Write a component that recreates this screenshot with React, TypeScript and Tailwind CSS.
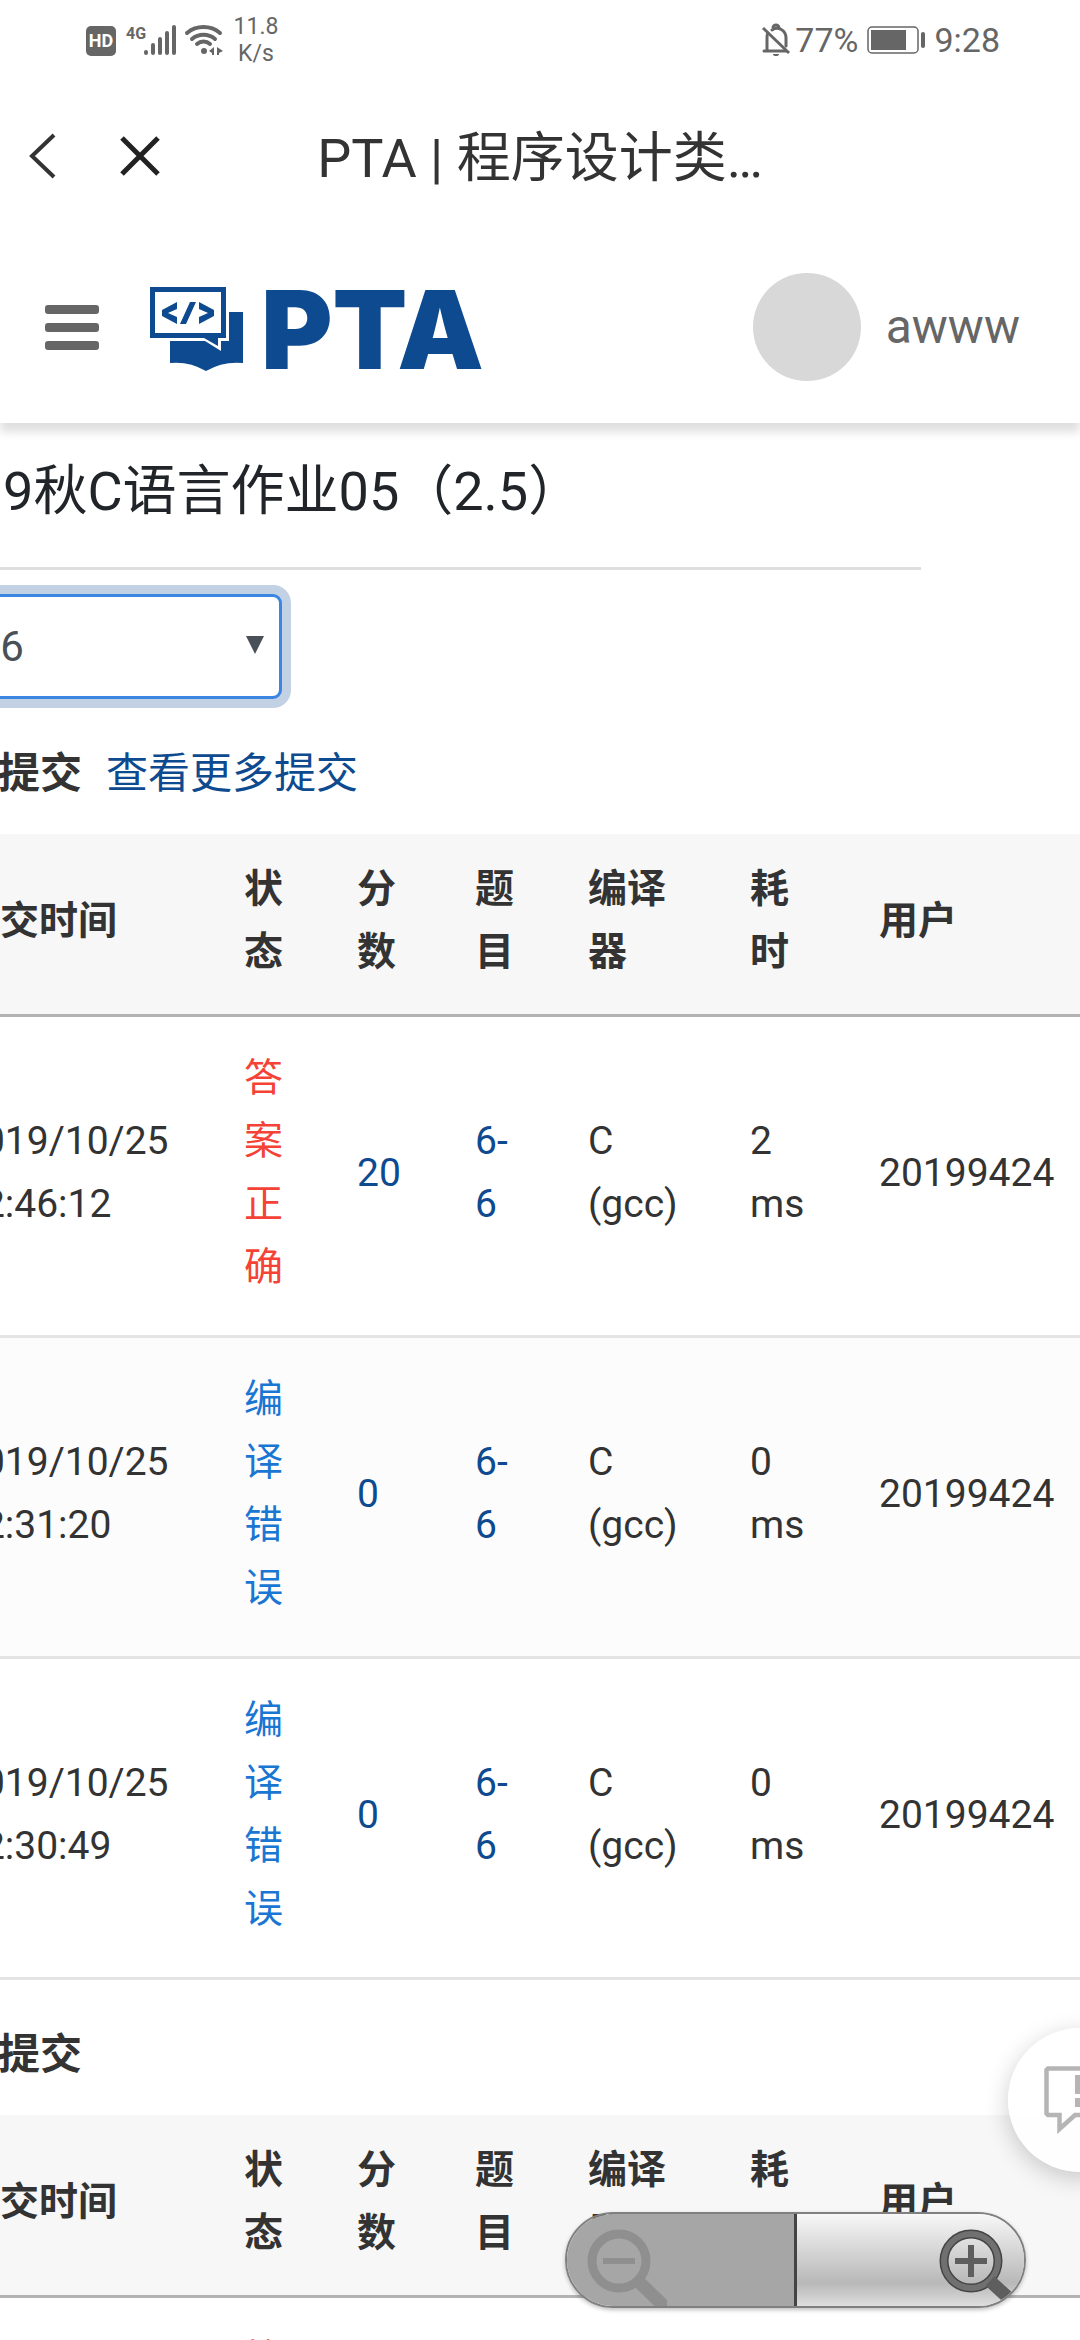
import { useState } from 'react';

const columns = ['提交时间', '状态', '分数', '题目', '编译器', '耗时', '用户'];

const latest = [
  { date: '2019/10/25', time: '12:46:12', status: '答案正确', ok: true, score: 20, cost: 2 },
  { date: '2019/10/25', time: '12:31:20', status: '编译错误', ok: false, score: 0, cost: 0 },
  { date: '2019/10/25', time: '12:30:49', status: '编译错误', ok: false, score: 0, cost: 0 },
];

const StatusBar = () => (
  <div className="flex h-20 items-center justify-between pr-20 pl-[86px] text-[#666]">
    <div className="flex items-center">
      <svg width="138" height="32" viewBox="0 0 138 32" fill="#666">
        <rect x="0" y="2" width="30" height="30" rx="5" />
        <text x="15" y="23" textAnchor="middle" fontFamily="Roboto" fontWeight="700" fontSize="18" fill="#fff">
          HD
        </text>
        <text x="40" y="15" fontFamily="Roboto" fontWeight="700" fontSize="16">
          4G
        </text>
        <g stroke="#666" strokeWidth="4" strokeLinecap="round">
          <path d="M60 28v1M67 21v8M74 15v14M81 9v20M88 3v26" />
        </g>
        <g stroke="#666" strokeWidth="4" strokeLinecap="round" fill="none">
          <path d="M101 9a26 26 0 0 1 33 0M106 15a18 18 0 0 1 23 0M111 20a10 10 0 0 1 13 0" />
        </g>
        <circle cx="118" cy="27" r="3" />
        <path d="M128 23v8h-2v-2l-3-2zM131 23l6 4-4 2v2h-2z" />
      </svg>
      <div className="w-16 text-center text-[23px] leading-[27px]">
        11.8
        <br />
        K/s
      </div>
    </div>
    <div className="flex items-center text-[34px]">
      <svg width="30" height="34" viewBox="0 0 30 34" fill="none" stroke="#666" strokeWidth="3">
        <path d="M3 28h22M6 28V15c0-2 0-4 1-5M11 7c6-4 14 0 14 8v8" strokeLinecap="round" />
        <path d="M12 5a3 3 0 0 1 6 0" />
        <path d="M12 31a3 2 0 0 0 6 0z" fill="#666" stroke="none" />
        <path d="M2 5l26 25" />
      </svg>
      <span className="ml-1">77%</span>
      <svg className="mx-2" width="60" height="28" viewBox="0 0 60 28">
        <rect x="2" y="1" width="50" height="26" rx="4" fill="none" stroke="#666" strokeWidth="1.5" />
        <rect x="5" y="4" width="35" height="20" fill="#666" />
        <rect x="55" y="6" width="4" height="16" rx="2" fill="#666" />
      </svg>
      <span>9:28</span>
    </div>
  </div>
);

const NavBar = () => (
  <div className="grid h-[151px] grid-cols-[200px_1fr_200px] items-center">
    <div className="flex items-center gap-[58px] pl-[26px]">
      <button aria-label="返回">
        <svg width="34" height="48" viewBox="0 0 34 48" fill="none" stroke="#333" strokeWidth="4">
          <path d="M28 3L6 24l22 21" />
        </svg>
      </button>
      <button aria-label="关闭">
        <svg width="44" height="44" viewBox="0 0 44 44" fill="none" stroke="#222" strokeWidth="5">
          <path d="M4 4l36 36M40 4L4 40" />
        </svg>
      </button>
    </div>
    <div className="pt-[6px] text-center text-[54px] whitespace-nowrap text-[#333]">PTA | 程序设计类…</div>
  </div>
);

const Header = () => (
  <header className="relative flex h-48 items-center justify-between bg-white pr-[60px] pl-[45px] shadow-[0_9px_9px_rgba(0,0,0,0.13)]">
    <div className="flex items-center">
      <button aria-label="菜单" className="flex flex-col gap-[9px]">
        <span className="h-[9px] w-[54px] rounded-[3px] bg-[#666]" />
        <span className="h-[9px] w-[54px] rounded-[3px] bg-[#666]" />
        <span className="h-[9px] w-[54px] rounded-[3px] bg-[#666]" />
      </button>
      <a href="#" className="ml-[51px] flex items-center gap-[18px] pt-1 text-[#0d4a8f]">
        <svg width="93" height="84" viewBox="0 0 93 84" fill="#0d4a8f">
          <path d="M79 25h14v51q-20-2-37 8q-17-10-36-8V54h35l16 10V54h8z" />
          <path d="M54 51h14v8z" />
          <rect x="2.5" y="2.5" width="71" height="46" fill="#fff" stroke="#0d4a8f" strokeWidth="5" />
          <path d="M27 15v7l-9 4 9 4v7l-15-8v-6zM49 15v7l9 4-9 4v7l15-8v-6zM40 15h6L36 37h-6z" />
        </svg>
        <span className="font-['Inter',sans-serif] text-[109px] leading-[108px] font-black">PTA</span>
      </a>
    </div>
    <div className="flex items-center gap-[25px]">
      <div className="size-[108px] rounded-full bg-[#d8d8d8]" />
      <span className="text-[48px] text-[#666]">awww</span>
    </div>
  </header>
);

const SubmissionTable = ({ rows }: { rows: typeof latest }) => (
  <table className="ml-[13px] w-[1172px] table-fixed border-collapse text-left text-[39px] leading-[63px] [&_td]:pt-[30px] [&_td]:pb-9">
    <colgroup>
      <col className="w-[283px]" />
      <col className="w-[113px]" />
      <col className="w-[118px]" />
      <col className="w-[113px]" />
      <col className="w-[162px]" />
      <col className="w-[129px]" />
      <col className="w-[254px]" />
    </colgroup>
    <thead>
      <tr className="border-b-[3px] border-[#b2b4b4] bg-[#f7f7f7]">
        {columns.map((name) => (
          <th key={name} className="pt-6 pr-[34px] pb-[30px] pl-9 font-bold">
            {name}
          </th>
        ))}
      </tr>
    </thead>
    <tbody>
      {rows.map((row) => (
        <tr key={row.time} className="border-b-[3px] border-[#e4e4e4] even:bg-[#fcfcfc]">
          <td className="pl-9">
            {row.date}
            <br />
            {row.time}
          </td>
          <td className={row.ok ? 'pr-[34px] pl-9 text-[#f44336]' : 'pr-[34px] pl-9 text-[#1976d2]'}>
            {row.status}
          </td>
          <td className="pl-9">
            <a href="#" className="text-[#0d4a8f]">
              {row.score}
            </a>
          </td>
          <td className="pr-[34px] pl-9">
            <a href="#" className="text-[#0d4a8f]">
              6-
              <br />6
            </a>
          </td>
          <td className="pl-9">
            C<br />
            (gcc)
          </td>
          <td className="pl-9">
            {row.cost}
            <br />
            ms
          </td>
          <td className="pl-9">20199424</td>
        </tr>
      ))}
    </tbody>
  </table>
);

const Feedback = () => (
  <button
    aria-label="反馈"
    className="absolute -right-[72px] bottom-[168px] flex size-36 items-center justify-center rounded-full bg-white/90 shadow-[0_6px_24px_rgba(0,0,0,0.2)]"
  >
    <svg width="72" height="68" viewBox="0 0 72 68" fill="none" stroke="#b5b5b5" strokeWidth="4.5">
      <path d="M4 2.500H68L69.500 4V47.500L68 49H31L15.500 63V49H4L2.500 47.500V4Z" />
      <path d="M31 9h10v19H31zM31 32h10v9H31z" fill="#b5b5b5" stroke="none" />
    </svg>
  </button>
);

// floating zoom in / zoom out pill, the left half is disabled
const ZoomControls = () => (
  <div className="absolute right-[54px] bottom-8 flex h-24 w-[461px] overflow-hidden rounded-full border-2 border-[#808080] shadow-[0_2px_4px_rgba(0,0,0,0.25)]">
    <button disabled aria-label="缩小" className="flex-1 border-r-[3px] border-[#444] bg-[#a6a6a6]">
      <svg width="100" height="92" viewBox="0 0 100 92" fill="none" stroke="#8f8f8f">
        <circle cx="52" cy="47" r="27" strokeWidth="9" />
        <path d="M36 47h32" strokeWidth="6" />
        <path d="M71 67l32 31" strokeWidth="13" />
      </svg>
    </button>
    <button
      aria-label="放大"
      className="flex flex-1 justify-end bg-linear-to-b from-[#f8f8f8] via-[#b8b8b8] via-75% to-[#dedede]"
    >
      <svg width="100" height="92" viewBox="0 0 100 92" fill="none" stroke="#5e5e5e">
        <circle cx="47" cy="47" r="27" stroke="#444" strokeWidth="9" />
        <circle cx="47" cy="47" r="27" stroke="#707070" strokeWidth="6" />
        <path d="M31 47h32M47 31v32" strokeWidth="6" />
        <path d="M66 67l24 22" strokeWidth="13" />
      </svg>
    </button>
  </div>
);

const App = () => {
  const [problem, setProblem] = useState('6-6');
  return (
    <div
      lang="zh-CN"
      className="relative h-screen overflow-hidden bg-white font-['Roboto','Noto_Sans_CJK_SC',sans-serif] text-[#333]"
    >
      <StatusBar />
      <NavBar />
      <Header />
      {/* the page content is scrolled a little to the right */}
      <main className="-ml-[88px]">
        <h1 className="mr-[159px] border-b-[3px] border-[#dee0e0] pt-7 pb-[35px] text-[54px] leading-[81px] text-[#212529]">
          2019秋C语言作业05（2.5）
        </h1>
        <div className="relative mt-6 w-[370px]">
          <select
            aria-label="题目"
            value={problem}
            onChange={(e) => setProblem(e.target.value)}
            className="block h-[105px] w-full appearance-none rounded-[9px] border-[3px] border-[#3b86e0] bg-white pl-[50px] text-[42px] text-[#495057] shadow-[0_0_0_9px_#c2d1e3] outline-none"
          >
            <option>6-6</option>
          </select>
          <svg className="pointer-events-none absolute top-[42px] right-[18px]" width="18" height="18" viewBox="0 0 18 18">
            <path d="M0 0h18L9 18z" fill="#495057" />
          </svg>
        </div>
        <div className="flex gap-6 pt-[43px] pb-[29px] pl-[2px] text-[42px] leading-[63px]">
          <h2 className="font-bold">最后提交</h2>
          <a href="#" className="text-[#0d4a8f]">
            查看更多提交
          </a>
        </div>
        <SubmissionTable rows={latest} />
        <div className="pt-[43px] pb-[29px] pl-[2px] text-[42px] leading-[63px]">
          <h2 className="font-bold">最高提交</h2>
        </div>
        <SubmissionTable rows={latest.slice(0, 1)} />
      </main>
      <Feedback />
      <ZoomControls />
    </div>
  );
};
export default App;
